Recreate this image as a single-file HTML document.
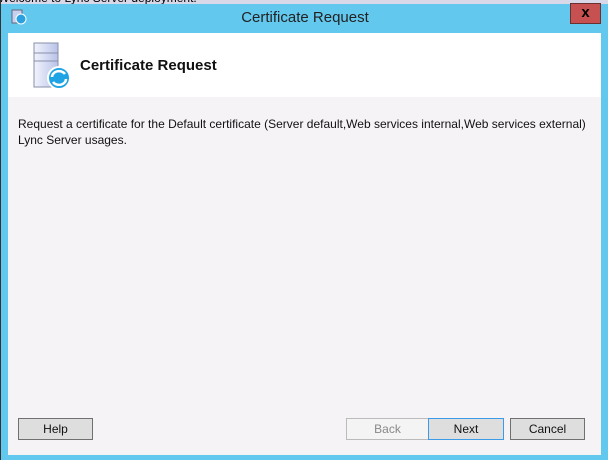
<!DOCTYPE html>
<html><head><style>
body{margin:0;width:608px;height:460px;position:relative;overflow:hidden;background:#63c8ee;font-family:"Liberation Sans",sans-serif;}
.top{position:absolute;left:0;top:0;width:608px;height:4px;background:#d8d8e8;overflow:hidden}
.top span{position:absolute;left:-2px;top:-9px;font-size:12px;color:#000}
.edge{position:absolute;left:0;top:0;width:1px;height:460px;background:#333}
.title{position:absolute;left:0;top:9px;width:610px;text-align:center;font-size:15px;color:#222;font-family:"Liberation Sans",sans-serif}
.close{position:absolute;left:570px;top:3px;width:31px;height:21px;background:#c75050;border:1px solid #6b3030;box-sizing:border-box;color:#000;font-weight:bold;text-align:center;font-size:15px;line-height:18px}
.win{position:absolute;left:8px;top:33px;width:593px;height:422px;background:#f6f3f7}
.hdr{position:absolute;left:0;top:0;width:593px;height:64px;background:#fff}
.hdr h1{position:absolute;left:72px;top:24px;margin:0;font-size:15px;font-weight:bold;color:#111;font-family:"Liberation Sans",sans-serif}
.txt{position:absolute;left:10px;top:83px;font-size:12px;line-height:16px;color:#111;width:580px}
.btn{position:absolute;top:385px;height:22px;box-sizing:border-box;border:1px solid #707070;background:#dedede;font-size:12px;text-align:center;line-height:20px;color:#111}
</style></head><body>
<div class="top"><span>Welcome to Lync Server deployment.</span></div>
<div class="edge"></div>
<svg style="position:absolute;left:11px;top:9px" width="16" height="16"><rect x="1" y="1" width="10" height="13" fill="#c8d0f0" stroke="#667"/><circle cx="10" cy="10" r="5" fill="#2aa0e0" stroke="#fff"/></svg>
<div class="title">Certificate Request</div>
<div class="close">x</div>
<div class="win">
<div class="hdr">
<svg style="position:absolute;left:17px;top:9px" width="50" height="50"><defs><linearGradient id="g" x1="0" x2="1"><stop offset="0" stop-color="#f2f4fc"/><stop offset="1" stop-color="#b8c2e8"/></linearGradient></defs><rect x="9" y="1" width="24" height="44" fill="url(#g)" stroke="#8890a8"/><line x1="9" y1="11" x2="33" y2="11" stroke="#8890a8"/><line x1="9" y1="19" x2="33" y2="19" stroke="#8890a8"/><circle cx="34" cy="36" r="11" fill="#1ea4e4" stroke="#fff" stroke-width="2"/><path d="M27 35a7 6 0 0 1 13-3M41 37a7 6 0 0 1-13 3" stroke="#fff" stroke-width="2.5" fill="none"/></svg>
<h1>Certificate Request</h1>
</div>
<div class="txt">Request a certificate for the Default certificate (Server default,Web services internal,Web services external) Lync Server usages.</div>
<div class="btn" style="left:10px;width:75px">Help</div>
<div class="btn" style="left:338px;width:83px;border-color:#bbb;background:#f4f4f4;color:#888">Back</div>
<div class="btn" style="left:420px;width:76px;border-color:#3c9be8">Next</div>
<div class="btn" style="left:502px;width:75px">Cancel</div>
</div>
</body></html>
